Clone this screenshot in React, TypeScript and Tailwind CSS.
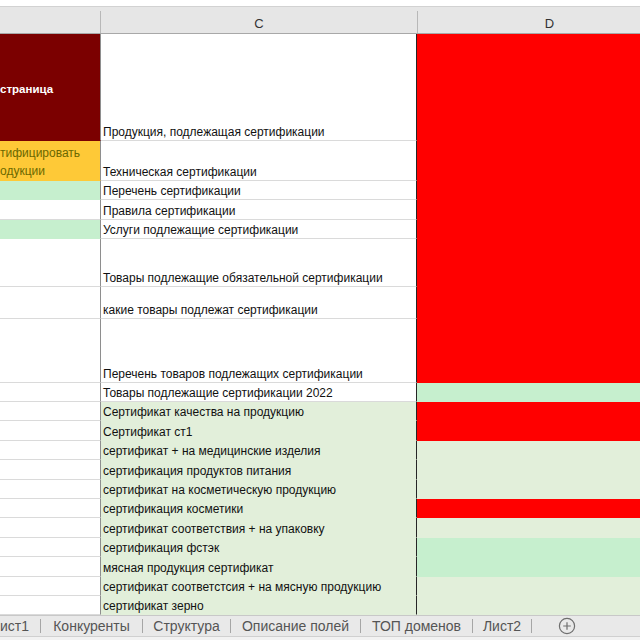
import React from "react";

type Row = {
  h: string;
  b: string; // classes for B cell
  bText?: React.ReactNode;
  c: string;
  cText: string;
  d: string;
};

const RED = "bg-[#ff0000] border-b-[#ff0000]";
const GREEN = "bg-[#c6efce] border-b-[#c6efce]";
const LGREEN = "bg-[#e2efda] border-b-[#e2efda]";
const WHITE = "bg-white border-b-[#dadada]";

const rows: Row[] = [
  {
    h: "h-[107px]",
    b: "bg-[#7b0000] border-b-[#7b0000] items-center",
    bText: <span className="text-white font-bold text-[11.5px] leading-[18px] pt-[3px]">страница</span>,
    c: WHITE,
    cText: "Продукция, подлежащая сертификации",
    d: RED,
  },
  {
    h: "h-[40px]",
    b: "bg-[#fec937] border-b-[#fec937] items-end",
    bText: (
      <div className="flex flex-col text-[#6b6800] text-[12px] leading-[18px]">
        <span>тифицировать</span>
        <span>одукции</span>
      </div>
    ),
    c: WHITE,
    cText: "Техническая сертификации",
    d: RED,
  },
  { h: "h-[19px]", b: GREEN, c: WHITE, cText: "Перечень сертификации", d: RED },
  { h: "h-[20px]", b: WHITE, c: WHITE, cText: "Правила сертификации", d: RED },
  { h: "h-[19px]", b: GREEN, c: WHITE, cText: "Услуги подлежащие сертификации", d: RED },
  { h: "h-[48px]", b: WHITE, c: WHITE, cText: "Товары подлежащие обязательной сертификации", d: RED },
  { h: "h-[32px]", b: WHITE, c: WHITE, cText: "какие товары подлежат сертификации", d: RED },
  { h: "h-[64px]", b: WHITE, c: WHITE, cText: "Перечень товаров подлежащих сертификации", d: RED },
  { h: "h-[19px]", b: WHITE, c: WHITE, cText: "Товары подлежащие сертификации 2022", d: GREEN },
  { h: "h-[19px]", b: WHITE, c: LGREEN, cText: "Сертификат качества на продукцию", d: RED },
  { h: "h-[20px]", b: WHITE, c: LGREEN, cText: "Сертификат ст1", d: RED },
  { h: "h-[19px]", b: WHITE, c: LGREEN, cText: "сертификат + на медицинские изделия", d: LGREEN },
  { h: "h-[20px]", b: WHITE, c: LGREEN, cText: "сертификация продуктов питания", d: LGREEN },
  { h: "h-[19px]", b: WHITE, c: LGREEN, cText: "сертификат на косметическую продукцию", d: LGREEN },
  { h: "h-[19px]", b: WHITE, c: LGREEN, cText: "сертификация косметики", d: RED },
  { h: "h-[20px]", b: WHITE, c: LGREEN, cText: "сертификат соответствия + на упаковку", d: LGREEN },
  { h: "h-[19px]", b: WHITE, c: LGREEN, cText: "сертификация фстэк", d: GREEN },
  { h: "h-[20px]", b: WHITE, c: LGREEN, cText: "мясная продукция сертификат", d: GREEN },
  { h: "h-[19px]", b: WHITE, c: LGREEN, cText: "сертификат соответстсия + на мясную продукцию", d: LGREEN },
  { h: "h-[19px]", b: WHITE, c: LGREEN, cText: "сертификат зерно", d: LGREEN },
];

const tabs = [
  { name: "ист1", w: "w-[41px]", j: "justify-start pl-0" },
  { name: "Конкуренты", w: "w-[102px]", j: "justify-center" },
  { name: "Структура", w: "w-[88px]", j: "justify-center" },
  { name: "Описание полей", w: "w-[130px]", j: "justify-center" },
  { name: "ТОП доменов", w: "w-[112px]", j: "justify-center" },
  { name: "Лист2", w: "w-[59px]", j: "justify-center" },
];

export default function App() {
  return (
    <div
      className="w-[640px] h-[640px] overflow-hidden bg-white flex flex-col"
      style={{ fontFamily: '"Liberation Sans", Arial, sans-serif' }}
    >
      {/* top white strip */}
      <div className="h-[6px] bg-white shrink-0" />
      {/* column header */}
      <div className="h-[28px] shrink-0 bg-[#e6e6e6] border-t border-t-[#d2d2d2] border-b border-b-[#a8a8a8] flex">
        <div className="w-[100px] shrink-0" />
        <div className="w-[317px] shrink-0 flex flex-col">
          <div className="h-[8px]" />
          <div className="flex-1 border-l border-l-[#b8b8b8] flex items-center justify-center pt-[3px] text-[13px] text-[#333]">
            C
          </div>
        </div>
        <div className="w-[264px] shrink-0 flex flex-col">
          <div className="h-[8px]" />
          <div className="flex-1 border-l border-l-[#b8b8b8] flex items-center justify-center pt-[3px] text-[13px] text-[#333]">
            D
          </div>
        </div>
      </div>

      {/* grid */}
      <div className="flex-1 overflow-hidden flex flex-col">
        {rows.map((r, i) => (
          <div key={i} className={`flex shrink-0 ${r.h}`}>
            <div
              className={`w-[101px] shrink-0 border-b border-r border-r-[#8e8e8e] flex overflow-hidden whitespace-nowrap ${r.b}`}
            >
              {r.bText}
            </div>
            <div
              className={`w-[316px] shrink-0 border-b border-r border-r-[#262626] flex items-end overflow-hidden whitespace-nowrap pl-[2px] text-[12px] leading-[15px] text-[#111] ${r.c}`}
            >
              {r.cText}
            </div>
            <div className={`w-[264px] shrink-0 border-b ${r.d}`} />
          </div>
        ))}
      </div>

      {/* sheet tabs */}
      <div className="h-[25px] shrink-0 flex flex-col bg-[#f2f2f2]">
        <div className="h-[22px] bg-[#e9e9e9] border-t border-t-[#c8c8c8] border-b border-b-[#d0d0d0] flex items-center text-[14px] text-[#555]">
          {tabs.map((t) => (
            <div key={t.name} className={`${t.w} shrink-0 flex items-center h-full`}>
              <div className={`flex-1 flex items-center ${t.j} whitespace-nowrap overflow-hidden`}>{t.name}</div>
              <div className="w-px h-[14px] bg-[#a6a6a6] shrink-0" />
            </div>
          ))}
          <div className="ml-[26px] flex items-center">
            <svg width="18" height="18" viewBox="0 0 18 18" fill="none" stroke="#6e6e6e" strokeWidth="1.2">
              <circle cx="9" cy="9" r="7.6" />
              <path d="M9 5.2v7.6M5.2 9h7.6" />
            </svg>
          </div>
        </div>
      </div>
    </div>
  );
}
